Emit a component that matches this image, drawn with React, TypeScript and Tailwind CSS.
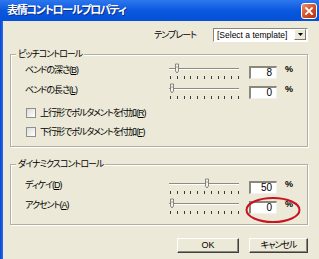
import React from "react";

const FONT = "font-['Liberation_Sans','Noto_Sans_CJK_JP',sans-serif] [font-feature-settings:'palt']";
const LBL = "text-[9px] leading-[12px] text-black tracking-[-1px]";

function Slider({ pos }: { pos: number }) {
  const ticks = Array.from({ length: 11 }, (_, i) => 1 + i * 6.8);
  return (
    <svg width="72" height="20" viewBox="0 0 72 20" className="block">
      <line x1="0" y1="7.5" x2="70" y2="7.5" stroke="#8E8B80" strokeWidth="1" />
      <line x1="0" y1="8.5" x2="70" y2="8.5" stroke="#FFFFFF" strokeWidth="1" />
      {ticks.map((x, i) => (
        <line key={i} x1={Math.round(x) + 0.5} y1="15" x2={Math.round(x) + 0.5} y2="18" stroke="#3A3A3A" strokeWidth="1" />
      ))}
      <g transform={`translate(${pos},0)`}>
        <path d="M-1.5 3 L1.5 3 L1.5 10 L0 12 L-1.5 10 Z" fill="#F4F3EE" stroke="#6E6C63" strokeWidth="0.8" />
        <line x1="-1" y1="6" x2="1" y2="6" stroke="#6E6C63" strokeWidth="0.6" />
      </g>
    </svg>
  );
}

function NumBox({ value }: { value: string }) {
  return (
    <div className="w-[28px] h-[13px] bg-white border-t-2 border-l-2 border-t-[#8A877C] border-l-[#8A877C] border-b border-r border-b-[#F2F1EA] border-r-[#F2F1EA] flex items-center justify-end pr-[4px] text-[10px] leading-none text-black">
      {value}
    </div>
  );
}

function SliderRow({
  label,
  pos,
  value,
}: {
  label: React.ReactNode;
  pos: number;
  value: string;
}) {
  return (
    <div className="flex items-start h-[20px]">
      <div className={`w-[158px] pl-[14px] pt-[3px] ${LBL}`}>{label}</div>
      <div className="w-[72px]">
        <Slider pos={pos} />
      </div>
      <div className="ml-[8px] mt-[5px]">
        <NumBox value={value} />
      </div>
      <div className="ml-[8px] mt-[3px] text-[9px] leading-[10px] font-bold text-black">%</div>
    </div>
  );
}

function CheckRow({ label }: { label: React.ReactNode }) {
  return (
    <div className="flex items-center h-[19px] pl-[15px]">
      <div className="w-[10px] h-[10px] border border-[#8E8F8F] bg-gradient-to-br from-[#DCDCD7] to-[#FFFFFF]" />
      <div className={`ml-[4px] ${LBL}`}>{label}</div>
    </div>
  );
}

function Group({
  title,
  children,
  className,
}: {
  title: string;
  children: React.ReactNode;
  className?: string;
}) {
  return (
    <div
      className={`relative ml-[7px] w-[298px] border border-[#B2AFA2] shadow-[inset_1px_1px_0_#ffffff,1px_1px_0_#ffffff] ${className ?? ""}`}
    >
      <div className={`absolute -top-[7px] left-[5px] bg-[#ECE9D8] px-[2px] ${LBL}`}>{title}</div>
      {children}
    </div>
  );
}

export default function App() {
  return (
    <div className={`w-[319px] h-[259px] overflow-hidden flex flex-col bg-[#ECE9D8] ${FONT}`}>
      {/* Title bar */}
      <div className="h-[21px] flex items-center justify-between pl-[7px] pr-[2px] bg-gradient-to-b from-[#2D77EE] via-[#0A58DE] to-[#0450D6]">
        <div className="text-white font-bold text-[11px] leading-none tracking-[-1.3px] [text-shadow:1px_1px_0_#0B2F8A]">
          表情コントロールプロパティ
        </div>
        <div className="w-[16px] h-[16px] mt-[1px] rounded-[3px] border border-white bg-gradient-to-br from-[#E9906F] via-[#D3532A] to-[#B0320C] flex items-center justify-center">
          <svg width="10" height="10" viewBox="0 0 10 10">
            <path d="M2 2 L8 8 M8 2 L2 8" stroke="#FFFFFF" strokeWidth="1.8" strokeLinecap="square" />
          </svg>
        </div>
      </div>
      {/* Body */}
      <div className="flex flex-1">
        <div className="w-[3px] bg-gradient-to-r from-[#0346D6] to-[#2C6BE6]" />
        <div className="flex-1 flex flex-col pt-[7px]">
          {/* Template row */}
          <div className="flex items-center justify-end pr-[11px] h-[14px]">
            <div className={LBL}>テンプレート</div>
            <div className="ml-[17px] w-[95px] h-[14px] flex bg-white border-t border-l border-t-[#8A877C] border-l-[#8A877C] border-b border-r border-b-white border-r-white">
              <div className="flex-1 pl-[3px] text-[8.5px] leading-[12px] text-black whitespace-nowrap overflow-hidden">
                [Select a template]
              </div>
              <div className="w-[12px] h-[11px] mr-[1px] bg-[#ECE9D8] border border-t-white border-l-white border-b-[#7A786F] border-r-[#7A786F] flex items-center justify-center">
                <svg width="5" height="3" viewBox="0 0 5 3">
                  <path d="M0 0 L5 0 L2.5 3 Z" fill="#000" />
                </svg>
              </div>
            </div>
          </div>

          {/* Group 1 */}
          <Group title="ピッチコントロール" className="mt-[12px] pt-[6px] pb-[5px]">
            <SliderRow
              label={
                <>
                  ベンドの深さ(<u>B</u>)
                </>
              }
              pos={8}
              value="8"
            />
            <SliderRow
              label={
                <>
                  ベンドの長さ(<u>L</u>)
                </>
              }
              pos={3}
              value="0"
            />
            <div className="h-[2px]" />
            <CheckRow
              label={
                <>
                  上行形でポルタメントを付加(<u>R</u>)
                </>
              }
            />
            <CheckRow
              label={
                <>
                  下行形でポルタメントを付加(<u>F</u>)
                </>
              }
            />
          </Group>

          {/* Group 2 */}
          <Group title="ダイナミクスコントロール" className="mt-[17px] pt-[11px] pb-[8px]">
            <SliderRow
              label={
                <>
                  ディケイ(<u>D</u>)
                </>
              }
              pos={38}
              value="50"
            />
            <div className="relative">
              <SliderRow
                label={
                  <>
                    アクセント(<u>A</u>)
                  </>
                }
                pos={3}
                value="0"
              />
              <svg
                className="absolute left-[233px] top-[0px]"
                width="58"
                height="28"
                viewBox="0 0 58 28"
              >
                <ellipse cx="29" cy="14" rx="26.5" ry="12" fill="none" stroke="#C8141E" strokeWidth="2" />
              </svg>
            </div>
          </Group>

          {/* Buttons */}
          <div className="flex justify-end gap-[10px] pr-[11px] mt-[13px]">
            <button className="w-[62px] h-[15px] bg-[#ECE9D8] border border-t-white border-l-white border-b-[#404040] border-r-[#404040] shadow-[inset_-1px_-1px_0_#8A877C] text-[9px] leading-none text-black">
              OK
            </button>
            <button className="w-[59px] h-[15px] bg-[#ECE9D8] border border-t-white border-l-white border-b-[#404040] border-r-[#404040] shadow-[inset_-1px_-1px_0_#8A877C] text-[9px] leading-none text-black tracking-[-1px]">
              キャンセル
            </button>
          </div>
        </div>
      </div>
    </div>
  );
}
